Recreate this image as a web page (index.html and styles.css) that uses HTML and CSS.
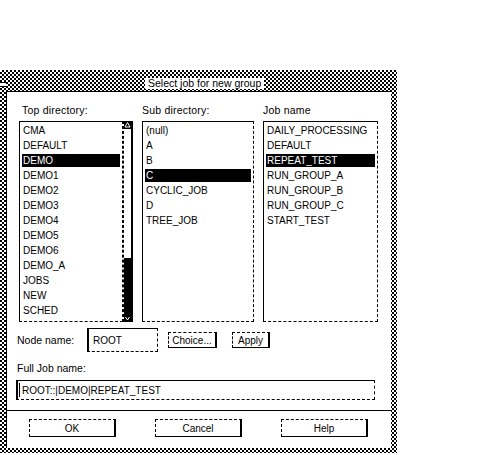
FILE: index.html
```html
<!DOCTYPE html>
<html>
<head>
<meta charset="utf-8">
<link rel="stylesheet" href="styles.css">
</head>
<body>
<div class="page">
  <div class="dialog">
    <div class="titlebar">
      <div class="menu-btn"></div>
      <div class="title">Select job for new group</div>
    </div>
    <div class="inner">
      <div class="columns">
        <div class="col col-top">
          <div class="col-label pad">Top directory:</div>
          <div class="list-wrap">
            <div class="list list-top">
              <div class="item">CMA</div>
              <div class="item">DEFAULT</div>
              <div class="item sel">DEMO</div>
              <div class="item">DEMO1</div>
              <div class="item">DEMO2</div>
              <div class="item">DEMO3</div>
              <div class="item">DEMO4</div>
              <div class="item">DEMO5</div>
              <div class="item">DEMO6</div>
              <div class="item">DEMO_A</div>
              <div class="item">JOBS</div>
              <div class="item">NEW</div>
              <div class="item">SCHED</div>
            </div>
            <div class="scrollbar">
              <div class="sb-arrow sb-up">
                <svg width="7" height="8" viewBox="0 0 7 8"><path d="M3.5 1.5 L6 6 L1 6 Z" fill="none" stroke="#fff" stroke-width="1"/></svg>
              </div>
              <div class="sb-trough"></div>
              <div class="sb-slider"></div>
              <div class="sb-arrow sb-down">
                <svg width="7" height="12" viewBox="0 0 7 12"><path d="M1.5 7 L3.5 10 L5.5 7" fill="none" stroke="#fff" stroke-width="1"/></svg>
              </div>
            </div>
          </div>
        </div>
        <div class="col col-sub">
          <div class="col-label">Sub directory:</div>
          <div class="list">
            <div class="item">(null)</div>
            <div class="item">A</div>
            <div class="item">B</div>
            <div class="item sel">C</div>
            <div class="item">CYCLIC_JOB</div>
            <div class="item">D</div>
            <div class="item">TREE_JOB</div>
          </div>
        </div>
        <div class="col col-job">
          <div class="col-label">Job name</div>
          <div class="list">
            <div class="item">DAILY_PROCESSING</div>
            <div class="item">DEFAULT</div>
            <div class="item sel">REPEAT_TEST</div>
            <div class="item">RUN_GROUP_A</div>
            <div class="item">RUN_GROUP_B</div>
            <div class="item">RUN_GROUP_C</div>
            <div class="item">START_TEST</div>
          </div>
        </div>
      </div>

      <div class="node-row">
        <div class="node-label">Node name:</div>
        <div class="field node-field">ROOT</div>
        <div class="btn small choice">Choice...</div>
        <div class="btn small apply">Apply</div>
      </div>

      <div class="full-label">Full Job name:</div>
      <div class="field full-field"><span class="caret"></span>ROOT::|DEMO|REPEAT_TEST</div>

      <div class="separator"></div>

      <div class="buttons">
        <div class="btn big">OK</div>
        <div class="btn big">Cancel</div>
        <div class="btn big">Help</div>
      </div>
    </div>
  </div>
</div>
</body>
</html>
```

FILE: styles.css
```css
html, body {
  margin: 0;
  padding: 0;
  background: #fff;
}

body {
  font-family: "Liberation Sans", Arial, sans-serif;
  color: #000;
}

.page {
  padding-top: 70px;
}

.dialog {
  width: 397px;
  height: 383px;
  box-sizing: border-box;
  padding: 0 6px 5px 6px;
  background-color: #fff;
  background-image: repeating-conic-gradient(#000 0 25%, #fff 0 50%);
  background-size: 4px 4px;
  display: flex;
  flex-direction: column;
}

.titlebar {
  height: 21px;
  margin: 0 -6px;
  display: flex;
  align-items: flex-start;
}

.menu-btn {
  width: 6px;
  height: 3px;
  margin-top: 12px;
  background: #fff;
  border-top: 1px solid #000;
  border-bottom: 1px solid #000;
}

.title {
  margin-top: 8px;
  margin-left: 139px;
  background: #fff;
  font-size: 10.5px;
  line-height: 11px;
  height: 11px;
  padding: 0 3px;
  white-space: nowrap;
}

.inner {
  flex: 1;
  background: #fff;
  border-top: 1px solid #000;
  border-left: 1px solid #000;
  display: flex;
  flex-direction: column;
}

.columns {
  display: flex;
  padding: 12px 0 0 12px;
  gap: 9px;
}

.col-top { width: 114px; }
.col-sub { width: 112px; }
.col-job { width: 115px; }

.col-label {
  font-size: 10.5px;
  line-height: 12px;
  height: 12px;
  margin-bottom: 5px;
  white-space: nowrap;
  letter-spacing: 0.2px;
}

.col-label.pad { padding-left: 3px; }

.list-wrap {
  display: flex;
}

.list {
  height: 201px;
  box-sizing: border-box;
  border-top: 1px solid #000;
  border-left: 1px solid #000;
  border-right: 1px dashed #000;
  border-bottom: 1px dashed #000;
  padding: 2px 2px;
  overflow: hidden;
}

.list-top {
  width: 104px;
}

.item {
  height: 13px;
  line-height: 13px;
  font-size: 10px;
  margin-bottom: 2px;
  padding-left: 1px;
  white-space: nowrap;
}

.item.sel {
  background: #000;
  color: #fff;
}

.scrollbar {
  width: 10px;
  height: 201px;
  box-sizing: border-box;
  border-left: 1px dashed #000;
  border-right: 2px solid #000;
  display: flex;
  flex-direction: column;
}

.sb-arrow {
  background: #000;
  display: flex;
  justify-content: center;
}

.sb-arrow svg { display: block; }

.sb-up { height: 8px; }
.sb-trough { height: 129px; background: #fff; }
.sb-slider { height: 52px; background: #000; }
.sb-down { height: 12px; }

.node-row {
  margin-top: 6px;
  height: 24px;
  display: flex;
  align-items: center;
  padding-left: 10px;
}

.node-label {
  width: 70px;
  font-size: 10.5px;
  white-space: nowrap;
}

.field {
  box-sizing: border-box;
  border-top: 1px solid #000;
  border-left: 2px solid #000;
  border-right: 1px dashed #000;
  border-bottom: 1px dashed #000;
  font-size: 10px;
  display: flex;
  align-items: center;
  white-space: nowrap;
}

.node-field {
  width: 71px;
  height: 24px;
  padding-left: 4px;
}

.btn {
  box-sizing: border-box;
  border-top: 1px dashed #000;
  border-left: 1px dashed #000;
  border-right: 2px solid #000;
  border-bottom: 1px solid #000;
  font-size: 10px;
  display: flex;
  align-items: center;
  justify-content: center;
  white-space: nowrap;
}

.btn.small {
  height: 16px;
}

.choice {
  width: 49px;
  margin-left: 10px;
}

.apply {
  width: 38px;
  margin-left: 15px;
}

.full-label {
  margin-top: 10px;
  height: 12px;
  line-height: 12px;
  padding-left: 10px;
  font-size: 10.5px;
}

.full-field {
  margin: 6px 0 0 9px;
  width: 359px;
  height: 20px;
  padding-left: 1px;
}

.caret {
  display: inline-block;
  width: 1px;
  height: 14px;
  background: #000;
  margin-right: 2px;
}

.separator {
  margin-top: 10px;
  height: 1px;
  background: #000;
}

.buttons {
  margin-top: 8px;
  display: flex;
  padding-left: 22px;
  gap: 39px;
}

.btn.big {
  width: 87px;
  height: 18px;
}
```
